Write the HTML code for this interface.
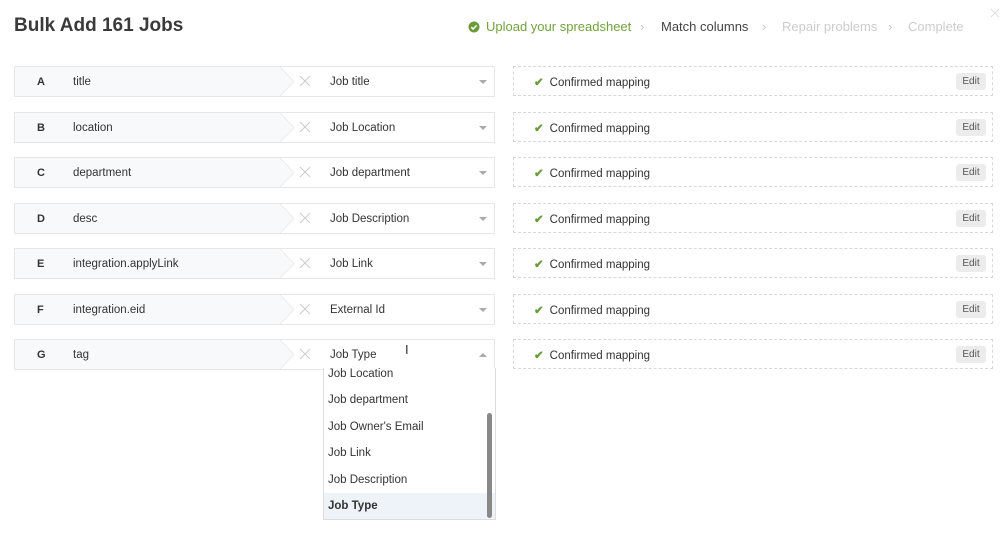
<!DOCTYPE html>
<html><head><style>
body{margin:0;width:1000px;height:536px;background:#fff;font-family:"Liberation Sans",sans-serif;position:relative;overflow:hidden;color:#333}
.t{position:absolute;left:14px;top:15px;font-size:19px;font-weight:bold;color:#3a3a3a}
.st{position:absolute;top:19px;font-size:13px}
.row{position:absolute;left:14px;width:479px;height:29px;border:1px solid #e6e6e6;background:#fff}
.lp{position:absolute;left:0;top:0;width:265px;height:29px;background:#f8f9fa}
.ch{position:absolute;left:265px;top:0;width:14px;height:29px}
.let{position:absolute;left:22px;top:9px;font-size:11px;font-weight:bold}
.nm{position:absolute;left:58px;top:9px;font-size:11.5px}
.x{position:absolute;left:284px;top:8px}
.sel{position:absolute;left:315px;top:9px;font-size:11.5px}
.car{position:absolute;left:464px;top:13px;border-left:4px solid transparent;border-right:4px solid transparent;border-top:4px solid #aaa}
.rb{position:absolute;left:513px;width:478px;height:28px;border:1px dashed #d8d8d8}
.ok{position:absolute;left:20px;top:8px;font-size:11.5px}
.ok b{color:#6a9a3a;margin-right:6px}
.ed{position:absolute;right:6px;top:6px;width:30px;height:17px;background:#ececec;border-radius:3px;font-size:10px;text-align:center;line-height:17px;color:#555}
.dd{position:absolute;left:323px;top:368px;width:171px;height:151px;border:1px solid #ddd;border-top:none;background:#fff;overflow:hidden}
.it{position:absolute;left:4px;font-size:11.5px;color:#333}
</style></head><body>
<div class="t">Bulk Add 161 Jobs</div>
<svg style="position:absolute;left:468px;top:21px" width="12" height="12"><circle cx="6" cy="6" r="5.5" fill="#6a9a3a"/><path d="M3.3 6.2l1.8 1.8 3.5-3.6" stroke="#fff" stroke-width="1.5" fill="none"/></svg>
<div class="st" style="left:486px;color:#72a23e">Upload your spreadsheet</div>
<div class="st" style="left:640px;color:#ccc">&#x203A;</div>
<div class="st" style="left:661px;color:#444">Match columns</div>
<div class="st" style="left:762px;color:#ccc">&#x203A;</div>
<div class="st" style="left:782px;color:#ccc">Repair problems</div>
<div class="st" style="left:888px;color:#ccc">&#x203A;</div>
<div class="st" style="left:908px;color:#ccc">Complete</div>
<svg style="position:absolute;left:990px;top:8px" width="10" height="10"><path d="M1 1L9 9M9 1L1 9" stroke="#ddd"/></svg>

<div id="rows"></div>
<script>
var d=[["A","title","Job title"],["B","location","Job Location"],["C","department","Job department"],["D","desc","Job Description"],["E","integration.applyLink","Job Link"],["F","integration.eid","External Id"],["G","tag","Job Type"]];
var h="";
d.forEach(function(r,i){var y=66+Math.round(i*45.5);
h+='<div class="row" style="top:'+y+'px"><div class="lp"></div><svg class="ch" width="14" height="29" style="position:absolute;left:265px;top:0"><path d="M0 0L14 14.5L0 29Z" fill="#f8f9fa"/><path d="M0 0L14 14.5L0 29" stroke="#ececec" fill="none"/></svg><div class="let">'+r[0]+'</div><div class="nm">'+r[1]+'</div><svg class="x" width="12" height="12"><path d="M1 1L11 11M11 1L1 11" stroke="#ccc" stroke-width="1"/></svg><div class="sel">'+r[2]+'</div>'+(i==6?'<div class="car" style="border-top:none;border-bottom:4px solid #aaa"></div>':'<div class="car"></div>')+'</div>';
h+='<div class="rb" style="top:'+y+'px"><div class="ok"><b>&#10004;</b>Confirmed mapping</div><div class="ed">Edit</div></div>';});
document.getElementById("rows").innerHTML=h;
</script>
<div style="position:absolute;left:405px;top:342px;font-size:13px;color:#333">I</div>
<div class="dd">
<div class="it" style="top:0px">Job Location</div>
<div class="it" style="top:26px">Job department</div>
<div class="it" style="top:53px">Job Owner's Email</div>
<div class="it" style="top:79px">Job Link</div>
<div class="it" style="top:106px">Job Description</div>
<div style="position:absolute;left:0;top:125px;width:171px;height:26px;background:#eef3f9"></div>
<div class="it" style="top:132px;font-weight:bold">Job Type</div>
<div style="position:absolute;left:163px;top:45px;width:5px;height:105px;background:#888;border-radius:3px"></div>
</div>
</body></html>
